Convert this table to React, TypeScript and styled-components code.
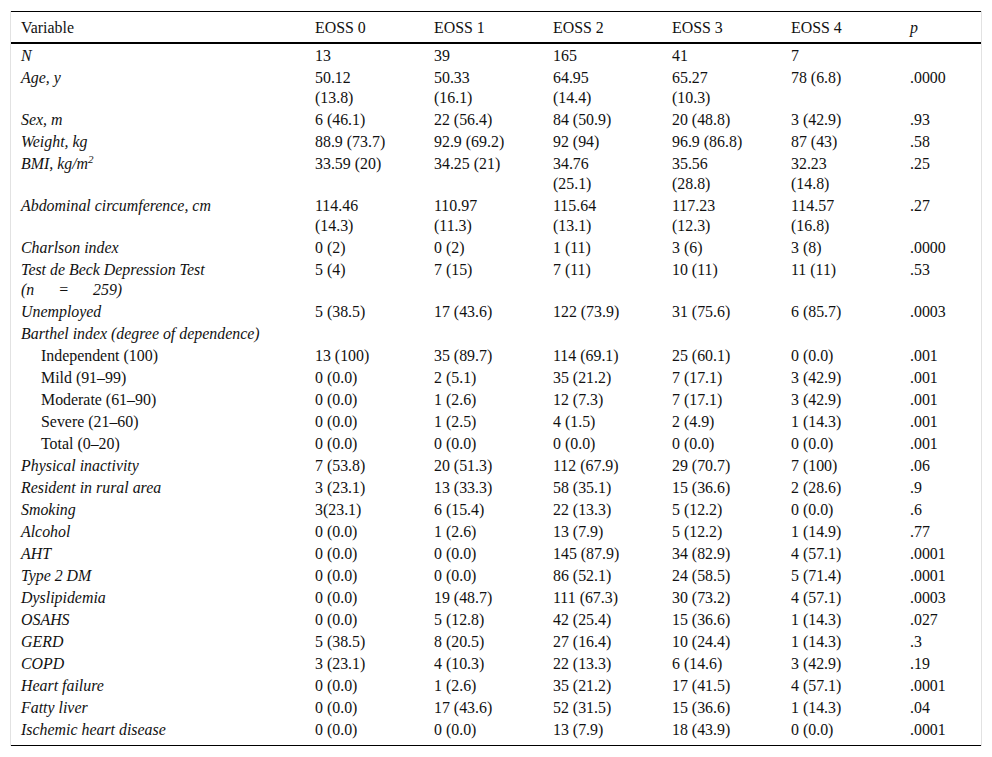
import * as React from 'react';
import styled, { createGlobalStyle } from 'styled-components';

const GlobalStyle = createGlobalStyle`
  html, body {
    margin: 0;
    padding: 0;
    background: #ffffff;
  }
`;

const StyledFrame = styled.div`
  margin: 11px 10px 0 10px;
  width: 970px;
  border-left: 1px solid #e2e2e2;
  border-right: 1px solid #e2e2e2;
`;

const StyledTable = styled.table`
  width: 970px;
  table-layout: fixed;
  border-collapse: collapse;
  font-family: 'Liberation Serif', 'Times New Roman', serif;
  font-size: 15.9px;
  line-height: 20px;
  color: #111;
  border-top: 1px solid #000;
  border-bottom: 1px solid #000;
`;

const StyledCol = styled.col<{ $width?: number }>`
  width: ${(p) => (p.$width ? `${p.$width}px` : 'auto')};
`;

const StyledHeadCell = styled.th<{ $italic?: boolean }>`
  text-align: left;
  font-weight: normal;
  font-style: ${(p) => (p.$italic ? 'italic' : 'normal')};
  height: 28px;
  padding: 2px 0 0 10px;
  border-bottom: 2px solid #000;
  vertical-align: middle;
`;

const StyledRow = styled.tr`
  &:last-child td {
    padding-bottom: 5px;
  }
`;

const StyledCell = styled.td<{ $italic?: boolean; $indent?: boolean }>`
  padding: 2px 0 0 ${(p) => (p.$indent ? '30px' : '10px')};
  font-style: ${(p) => (p.$italic ? 'italic' : 'normal')};
  vertical-align: top;
  white-space: pre-line;
`;

const StyledSup = styled.sup`
  font-size: 11px;
  line-height: 0;
`;

const StyledGap = styled.span`
  display: inline-block;
  width: 24px;
`;

type Row = {
  label: React.ReactNode;
  values: string[];
  indent?: boolean;
};

const rows: Row[] = [
  { label: 'N', values: ['13', '39', '165', '41', '7', ''] },
  { label: 'Age, y', values: ['50.12\n(13.8)', '50.33\n(16.1)', '64.95\n(14.4)', '65.27\n(10.3)', '78 (6.8)', '.0000'] },
  { label: 'Sex, m', values: ['6 (46.1)', '22 (56.4)', '84 (50.9)', '20 (48.8)', '3 (42.9)', '.93'] },
  { label: 'Weight, kg', values: ['88.9 (73.7)', '92.9 (69.2)', '92 (94)', '96.9 (86.8)', '87 (43)', '.58'] },
  {
    label: (
      <>
        BMI, kg/m<StyledSup>2</StyledSup>
      </>
    ),
    values: ['33.59 (20)', '34.25 (21)', '34.76\n(25.1)', '35.56\n(28.8)', '32.23\n(14.8)', '.25'],
  },
  { label: 'Abdominal circumference, cm', values: ['114.46\n(14.3)', '110.97\n(11.3)', '115.64\n(13.1)', '117.23\n(12.3)', '114.57\n(16.8)', '.27'] },
  { label: 'Charlson index', values: ['0 (2)', '0 (2)', '1 (11)', '3 (6)', '3 (8)', '.0000'] },
  {
    label: (
      <>
        Test de Beck Depression Test
        <br />
        (n<StyledGap />=<StyledGap />259)
      </>
    ),
    values: ['5 (4)', '7 (15)', '7 (11)', '10 (11)', '11 (11)', '.53'],
  },
  { label: 'Unemployed', values: ['5 (38.5)', '17 (43.6)', '122 (73.9)', '31 (75.6)', '6 (85.7)', '.0003'] },
  { label: 'Barthel index (degree of dependence)', values: ['', '', '', '', '', ''] },
  { label: 'Independent (100)', indent: true, values: ['13 (100)', '35 (89.7)', '114 (69.1)', '25 (60.1)', '0 (0.0)', '.001'] },
  { label: 'Mild (91–99)', indent: true, values: ['0 (0.0)', '2 (5.1)', '35 (21.2)', '7 (17.1)', '3 (42.9)', '.001'] },
  { label: 'Moderate (61–90)', indent: true, values: ['0 (0.0)', '1 (2.6)', '12 (7.3)', '7 (17.1)', '3 (42.9)', '.001'] },
  { label: 'Severe (21–60)', indent: true, values: ['0 (0.0)', '1 (2.5)', '4 (1.5)', '2 (4.9)', '1 (14.3)', '.001'] },
  { label: 'Total (0–20)', indent: true, values: ['0 (0.0)', '0 (0.0)', '0 (0.0)', '0 (0.0)', '0 (0.0)', '.001'] },
  { label: 'Physical inactivity', values: ['7 (53.8)', '20 (51.3)', '112 (67.9)', '29 (70.7)', '7 (100)', '.06'] },
  { label: 'Resident in rural area', values: ['3 (23.1)', '13 (33.3)', '58 (35.1)', '15 (36.6)', '2 (28.6)', '.9'] },
  { label: 'Smoking', values: ['3(23.1)', '6 (15.4)', '22 (13.3)', '5 (12.2)', '0 (0.0)', '.6'] },
  { label: 'Alcohol', values: ['0 (0.0)', '1 (2.6)', '13 (7.9)', '5 (12.2)', '1 (14.9)', '.77'] },
  { label: 'AHT', values: ['0 (0.0)', '0 (0.0)', '145 (87.9)', '34 (82.9)', '4 (57.1)', '.0001'] },
  { label: 'Type 2 DM', values: ['0 (0.0)', '0 (0.0)', '86 (52.1)', '24 (58.5)', '5 (71.4)', '.0001'] },
  { label: 'Dyslipidemia', values: ['0 (0.0)', '19 (48.7)', '111 (67.3)', '30 (73.2)', '4 (57.1)', '.0003'] },
  { label: 'OSAHS', values: ['0 (0.0)', '5 (12.8)', '42 (25.4)', '15 (36.6)', '1 (14.3)', '.027'] },
  { label: 'GERD', values: ['5 (38.5)', '8 (20.5)', '27 (16.4)', '10 (24.4)', '1 (14.3)', '.3'] },
  { label: 'COPD', values: ['3 (23.1)', '4 (10.3)', '22 (13.3)', '6 (14.6)', '3 (42.9)', '.19'] },
  { label: 'Heart failure', values: ['0 (0.0)', '1 (2.6)', '35 (21.2)', '17 (41.5)', '4 (57.1)', '.0001'] },
  { label: 'Fatty liver', values: ['0 (0.0)', '17 (43.6)', '52 (31.5)', '15 (36.6)', '1 (14.3)', '.04'] },
  { label: 'Ischemic heart disease', values: ['0 (0.0)', '0 (0.0)', '13 (7.9)', '18 (43.9)', '0 (0.0)', '.0001'] },
];

const headers = ['EOSS 0', 'EOSS 1', 'EOSS 2', 'EOSS 3', 'EOSS 4'];

const App: React.FC = () => {
  return (
    <>
      <GlobalStyle />
      <StyledFrame>
        <StyledTable>
          <colgroup>
            <StyledCol $width={294} />
            {headers.map((h) => (
              <StyledCol key={h} $width={119} />
            ))}
            <StyledCol />
          </colgroup>
          <thead>
            <tr>
              <StyledHeadCell>Variable</StyledHeadCell>
              {headers.map((h) => (
                <StyledHeadCell key={h}>{h}</StyledHeadCell>
              ))}
              <StyledHeadCell $italic>p</StyledHeadCell>
            </tr>
          </thead>
          <tbody>
            {rows.map((row, i) => (
              <StyledRow key={i}>
                <StyledCell $italic={!row.indent} $indent={row.indent}>
                  {row.label}
                </StyledCell>
                {row.values.map((v, j) => (
                  <StyledCell key={j}>{v}</StyledCell>
                ))}
              </StyledRow>
            ))}
          </tbody>
        </StyledTable>
      </StyledFrame>
    </>
  );
};

export default App;
